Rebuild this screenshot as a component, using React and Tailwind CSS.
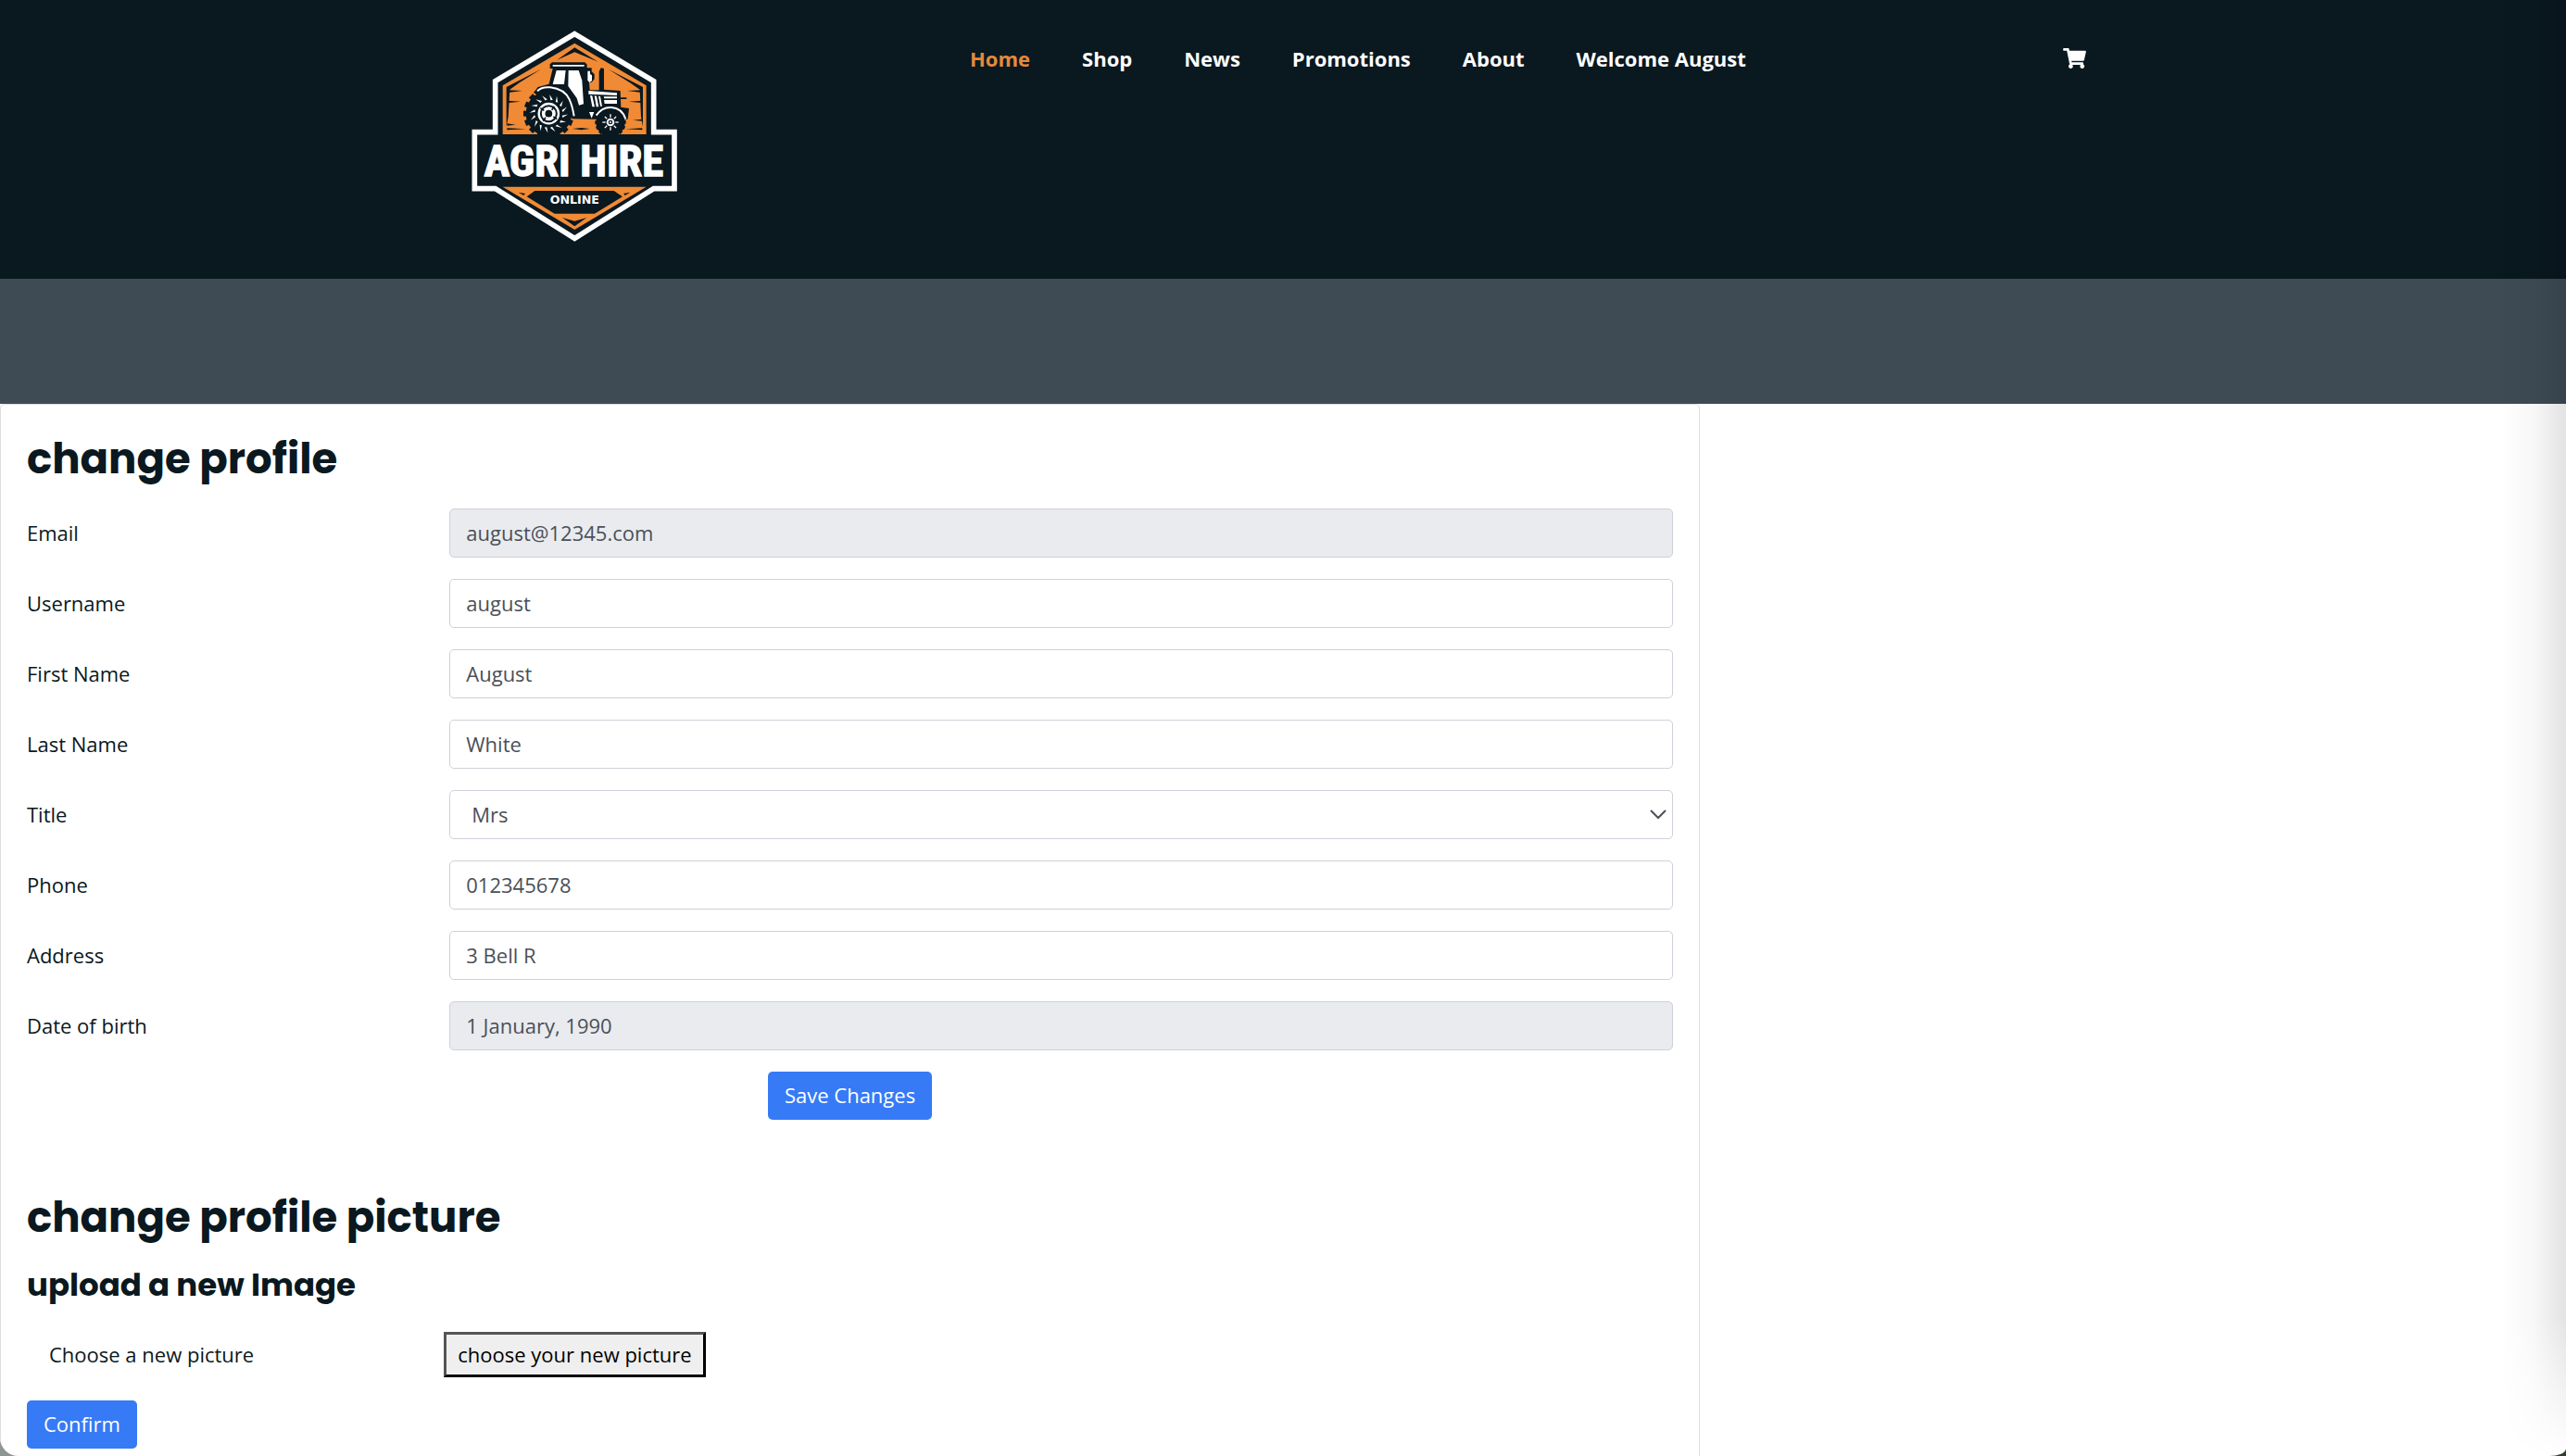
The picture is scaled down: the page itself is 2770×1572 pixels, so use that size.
import React from "react";
import { FaShoppingCart } from "react-icons/fa";

const links = ["Home", "Shop", "News", "Promotions", "About", "Welcome August"];

const fields = [
  { id: "email", label: "Email", value: "august@12345.com", disabled: true },
  { id: "username", label: "Username", value: "august" },
  { id: "first-name", label: "First Name", value: "August" },
  { id: "last-name", label: "Last Name", value: "White" },
  { id: "title", label: "Title", value: "Mrs", options: ["Mr", "Mrs", "Ms", "Miss", "Dr"] },
  { id: "phone", label: "Phone", value: "012345678" },
  { id: "address", label: "Address", value: "3 Bell R" },
  { id: "dob", label: "Date of birth", value: "1 January, 1990", disabled: true },
];

const teeth = Array.from({ length: 16 }, (_, i) => i * 22.5);
const spokes = Array.from({ length: 8 }, (_, i) => i * 45);

function Logo() {
  return (
    <svg viewBox="0 0 780 780" className="size-[260px]" role="img" aria-label="Agri Hire Online">
      <path
        d="M391 50 L647 203 V368 H714 V551 H647 L391 712 L134 551 H67 V368 H134 V203 Z"
        fill="#0a1820"
        stroke="#fff"
        strokeWidth="17"
      />
      <path d="M391 80 L623 217 V375 H158 V217 Z" fill="#f08a35" />
      <g fill="#0a1820">
        <path d="M391 94 L467 140 L391 109 L334 134 Z" />
        <path d="M170 222 L282 164 L212 208 L181 230 L176 318 L170 350 Z" />
        <path d="M612 222 L500 164 L570 208 L602 230 L606 318 L612 350 Z" />
        <path d="M176 232 L222 234 L176 240 Z M176 266 L216 269 L176 273 Z M172 340 L200 344 L172 347 Z M172 355 L234 358 L172 361 Z" />
        <path d="M608 232 L562 234 L608 240 Z M608 266 L566 269 L608 273 Z M610 326 L580 329 L610 332 Z M610 355 L556 358 L610 361 Z" />
        <path d="M384 357 L412 354 L441 357 L412 361 Z M540 256 H559 V261 H540 Z" />
        <path d="M311 148 L318 142 H424 L431 149 V160 H446 V172 L455 180 V196 L446 207 H438 L440 232 H470 V172 L476 160 L486 162 V230 L539 234 L541 287 L567 291 L563 326 H452 L384 325 L350 300 L258 240 L272 222 L308 212 L320 162 H311 Z" />
        <circle cx="307" cy="308" r="74" />
        {teeth.map((a) => (
          <path key={a} d="M298 226 H316 V244 H298 Z" transform={`rotate(${a} 307 308)`} />
        ))}
        <circle cx="507" cy="336" r="47" />
        {teeth.map((a) => (
          <path key={a} d="M501 286 H512 V298 H501 Z" transform={`rotate(${a} 507 336)`} />
        ))}
      </g>
      <rect x="150" y="375" width="480" height="20" fill="#0a1820" />
      <g fill="#fff">
        <path d="M320 150 H422 V155 H320 Z" />
        <path d="M332 168 H362 L357 213 H320 Z" />
        <path d="M371 168 H404 L415 200 L420 277 L405 281 L398 258 L370 219 Z" />
        <path d="M433 170 H441 V180 L447 184 V202 L439 207 L433 200 Z" />
        <path d="M436 234 L528 241 V249 L436 245 Z" />
        <path d="M441 249 L448 250 L456 286 H448 Z M455 250 L462 251 L469 286 H461 Z M468 251 L474 252 L480 284 H474 Z" />
        <path d="M485 253 H528 V259 H487 Z M486 264 H528 V276 H488 Z M438 303 H454 L446 323 Z" />
      </g>
      <path d="M270 235 Q284 220 312 223 Q358 228 374 262 Q384 284 389 316" fill="none" stroke="#fff" strokeWidth="6" />
      <path d="M461 314 Q480 286 510 288 Q544 290 556 325" fill="none" stroke="#fff" strokeWidth="6" />
      <g fill="#fff">
        {teeth.map((a) => (
          <path key={a} d="M301 246 L307 264 L314 262 Z" transform={`rotate(${a + 8} 307 308)`} />
        ))}
        {spokes.map((a) => (
          <path key={a} d="M505 310 H509 V320 H505 Z" transform={`rotate(${a} 507 336)`} />
        ))}
      </g>
      <circle cx="307" cy="308" r="32" fill="#0a1820" stroke="#fff" strokeWidth="7" />
      <circle cx="307" cy="308" r="17" fill="#0a1820" stroke="#fff" strokeWidth="11" />
      <path d="M280 290 L292 298 M322 318 L334 326 M325 284 L317 296 M297 320 L289 332" stroke="#0a1820" strokeWidth="5" />
      <circle cx="507" cy="336" r="10" fill="#0a1820" stroke="#fff" strokeWidth="6" />
      <circle cx="507" cy="336" r="3" fill="#fff" />
      <path d="M158 545 H623 L391 684 Z" fill="#f08a35" />
      <path d="M262 558 H518 L546 577 L456 632 H326 L236 577 Z" fill="#0a1820" />
      <path d="M209 563 L231 567 L226 573 Z M571 563 L549 567 L554 573 Z" fill="#0a1820" />
      <path d="M351 645 L391 656 L430 645 L391 673 Z" fill="#0a1820" />
      <text
        x="388"
        y="511"
        textAnchor="middle"
        fill="#fff"
        stroke="#fff"
        strokeWidth="4"
        className="font-['Liberation_Sans_Narrow','Roboto_Condensed','Liberation_Sans',sans-serif] text-[140px] font-bold"
      >
        AGRI HIRE
      </text>
      <text
        x="391"
        y="601"
        textAnchor="middle"
        fill="#fff"
        className="font-['DejaVu_Sans',sans-serif] text-[38px] font-bold"
      >
        ONLINE
      </text>
    </svg>
  );
}

function Field({ id, label, value, disabled, options }) {
  const box =
    "h-[53px] w-full rounded-[5px] border border-[#ced1d8] pb-0.5 text-[22px] text-[#4b5057]";
  return (
    <div className="grid grid-cols-[1fr_3fr] items-center gap-4">
      <label htmlFor={id} className="pb-0.5">
        {label}
      </label>
      {options ? (
        <div className="relative">
          <select id={id} defaultValue={value} className={`${box} appearance-none bg-white pl-[23px] pr-12`}>
            {options.map((o) => (
              <option key={o}>{o}</option>
            ))}
          </select>
          <svg
            viewBox="0 0 18 11"
            className="pointer-events-none absolute right-[7px] top-[21px] h-[11px] w-[18px]"
            fill="none"
            stroke="#4b5057"
            strokeWidth="2"
            aria-hidden="true"
          >
            <path d="M1 1 L9 9 L17 1" />
          </svg>
        </div>
      ) : (
        <input
          id={id}
          type="text"
          defaultValue={value}
          disabled={disabled}
          className={`${box} bg-white px-[17px] disabled:bg-[#e9ebef]`}
        />
      )}
    </div>
  );
}

export default function App() {
  return (
    <div className="bg-linear-to-r from-[#8d9693] to-[#2f3f2c]">
      <div className="relative min-h-screen overflow-hidden rounded-bl-[20px] bg-white font-['Open_Sans',sans-serif] text-[22px] leading-[34px] text-[#0a1820] [border-bottom-right-radius:18px_8px]">
        <header className="bg-[#0a1820] pb-[21px] pt-5">
          <div className="mx-auto flex max-w-[1848px] items-start pl-[29px] pr-[57px]">
            <a href="#home" className="shrink-0">
              <Logo />
            </a>
            <nav className="ml-[297px] mt-[26px] flex gap-14 whitespace-nowrap font-bold text-white">
              {links.map((l) => (
                <a key={l} href="#home" className="first:text-[#e58a3c]">
                  {l}
                </a>
              ))}
            </nav>
            <a href="#cart" aria-label="Cart" className="ml-auto mt-8 text-white">
              <FaShoppingCart className="h-[22px] w-[25px]" />
            </a>
          </div>
        </header>
        <div className="h-[135px] bg-[#3e4b55]" />
        <main className="w-[66.25%] rounded-t-[5px] border border-b-0 border-[#dcdee0] px-7 pb-2 pt-[26px]">
          <h1 className="font-['Poppins','Inter',sans-serif] text-[45px] font-bold leading-[66px]">change profile</h1>
          <form className="mt-5 flex flex-col gap-[23px]" onSubmit={(e) => e.preventDefault()}>
            {fields.map((f) => (
              <Field key={f.id} {...f} />
            ))}
            <button type="submit" className="h-[52px] self-center rounded-[5px] bg-[#367af6] px-[18px] pb-0.5 text-white">
              Save Changes
            </button>
          </form>
          <h1 className="mt-[73px] font-['Poppins','Inter',sans-serif] text-[45px] font-bold leading-[66px]">
            change profile picture
          </h1>
          <h2 className="mt-4 font-['Poppins','Inter',sans-serif] text-[34px] font-bold leading-[46px]">
            upload a new Image
          </h2>
          <div className="mt-[28px] grid grid-cols-[1fr_3fr] items-center gap-2">
            <span className="pb-0.5 pl-6">Choose a new picture</span>
            <button
              type="button"
              className="h-[49px] justify-self-start border-[3px] border-b-black border-l-[#555] border-r-black border-t-[#555] bg-[#efefef] px-3 pb-0.5 text-black"
            >
              choose your new picture
            </button>
          </div>
          <button type="button" className="mt-[25px] h-[52px] rounded-[5px] bg-[#367af6] px-[18px] pb-0.5 text-white">
            Confirm
          </button>
        </main>
        <div className="pointer-events-none absolute inset-y-0 right-0 w-[70px] bg-linear-to-r from-black/0 via-black/3 to-black/11 [mask-image:linear-gradient(to_bottom,black_calc(100%-150px),transparent)]" />
      </div>
    </div>
  );
}
